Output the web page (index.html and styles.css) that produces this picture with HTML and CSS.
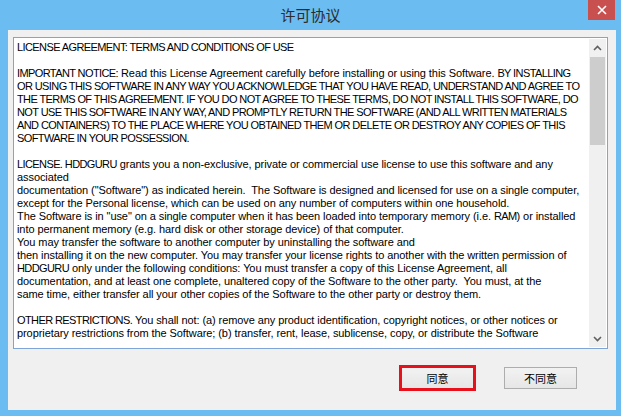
FILE: index.html
```html
<!DOCTYPE html>
<html>
<head>
<meta charset="utf-8">
<link rel="stylesheet" href="styles.css">
</head>
<body>
<div class="window">
  <div class="titlebar">
    <span class="title">许可协议</span>
    <div class="close"><svg width="10" height="10" viewBox="0 0 10 10"><path d="M1 1L9 9M9 1L1 9" stroke="#fff" stroke-width="1.6"/></svg></div>
  </div>
  <div class="client">
    <div class="textbox">
      <div class="text">
        <p><span class="caps">LICENSE AGREEMENT: TERMS AND CONDITIONS OF USE</span></p>
        <p><span class="caps">IMPORTANT NOTICE:</span> Read this License Agreement carefully before installing or using this Software. <span class="caps">BY INSTALLING</span><br><span class="caps">OR USING THIS SOFTWARE IN ANY WAY YOU ACKNOWLEDGE THAT YOU HAVE READ, UNDERSTAND AND AGREE TO</span><br><span class="caps">THE TERMS OF THIS AGREEMENT. IF YOU DO NOT AGREE TO THESE TERMS, DO NOT INSTALL THIS SOFTWARE, DO</span><br><span class="caps">NOT USE THIS SOFTWARE IN ANY WAY, AND PROMPTLY RETURN THE SOFTWARE (AND ALL WRITTEN MATERIALS</span><br><span class="caps">AND CONTAINERS) TO THE PLACE WHERE YOU OBTAINED THEM OR DELETE OR DESTROY ANY COPIES OF THIS</span><br><span class="caps">SOFTWARE IN YOUR POSSESSION.</span></p>
        <p><span class="caps">LICENSE. HDDGURU</span> grants you a non-exclusive, private or commercial use license to use this software and any<br>associated<br>documentation ("Software") as indicated herein.&nbsp; The Software is designed and licensed for use on a single computer,<br>except for the Personal license, which can be used on any number of computers within one household.<br>The Software is in "use" on a single computer when it has been loaded into temporary memory (i.e. <span class="caps">RAM</span>) or installed<br>into permanent memory (e.g. hard disk or other storage device) of that computer.<br>You may transfer the software to another computer by uninstalling the software and<br>then installing it on the new computer. You may transfer your license rights to another with the written permission of<br><span class="caps">HDDGURU</span> only under the following conditions: You must transfer a copy of this License Agreement, all<br>documentation, and at least one complete, unaltered copy of the Software to the other party.&nbsp; You must, at the<br>same time, either transfer all your other copies of the Software to the other party or destroy them.</p>
        <p><span class="caps">OTHER RESTRICTIONS.</span> You shall not: (a) remove any product identification, copyright notices, or other notices or<br>proprietary restrictions from the Software; (b) transfer, rent, lease, sublicense, copy, or distribute the Software</p>
      </div>
      <div class="scrollbar">
        <div class="arrow"><svg width="9" height="6" viewBox="0 0 9 6"><path d="M1 5L4.5 1.5L8 5" fill="none" stroke="#606060" stroke-width="1.6"/></svg></div>
        <div class="track"><div class="thumb"></div></div>
        <div class="arrow"><svg width="9" height="6" viewBox="0 0 9 6"><path d="M1 1L4.5 4.5L8 1" fill="none" stroke="#606060" stroke-width="1.6"/></svg></div>
      </div>
    </div>
    <div class="buttons">
      <button class="btn focused">同意</button>
      <button class="btn">不同意</button>
    </div>
  </div>
</div>
</body>
</html>
```
FILE: styles.css
```css
html, body {
  margin: 0;
  padding: 0;
}
body {
  width: 621px;
  height: 416px;
  overflow: hidden;
  font-family: "Liberation Sans", Arial, sans-serif;
}
.window {
  box-sizing: border-box;
  width: 621px;
  height: 416px;
  background: #6bbcf0;
  padding: 0 5px 6px 8px;
  display: flex;
  flex-direction: column;
  position: relative;
}
.titlebar {
  height: 30px;
  display: flex;
  align-items: center;
  justify-content: center;
  flex: none;
}
.title {
  font-family: "Noto Sans CJK SC", sans-serif;
  font-size: 15px;
  color: #2b2b2b;
  margin-left: -3px;
  margin-top: -1px;
}
.close {
  position: absolute;
  top: 0;
  right: 6px;
  width: 27px;
  height: 20px;
  background: #c8504f;
  display: flex;
  align-items: center;
  justify-content: center;
}
.client {
  flex: 1;
  background: #f0f0f0;
  padding: 7px 8px 0 5px;
  display: flex;
  flex-direction: column;
}
.textbox {
  height: 312px;
  box-sizing: border-box;
  border: 1px solid #7ea5d6;
  background: #fff;
  display: flex;
}
.text {
  flex: 1;
  padding: 3px 0 0 3px;
  font-size: 11px;
  line-height: 13px;
  letter-spacing: -0.08px;
  color: #000;
  white-space: nowrap;
  overflow: hidden;
}
.text p {
  margin: 0 0 13px 0;
}
.caps {
  letter-spacing: -0.6px;
}
.scrollbar {
  width: 17px;
  background: #f0f0f0;
  display: flex;
  flex-direction: column;
  margin: 1px 1px 1px 0;
}
.arrow {
  height: 17px;
  display: flex;
  align-items: center;
  justify-content: center;
}
.track {
  flex: 1;
  padding: 1px 1px;
}
.thumb {
  height: 88px;
  background: #cdcdcd;
}
.buttons {
  display: flex;
  justify-content: flex-end;
  gap: 30px;
  padding: 18px 31px 0 0;
}
.btn {
  width: 73px;
  height: 22px;
  box-sizing: border-box;
  border: 1px solid #adadad;
  background: linear-gradient(#f2f2f2, #e6e6e6);
  font-family: "Noto Sans CJK SC", sans-serif;
  font-size: 11px;
  color: #000;
  padding: 0;
  line-height: 20px;
}
.btn.focused {
  outline: 3px solid #e8101a;
  outline-offset: -1px;
}
```
